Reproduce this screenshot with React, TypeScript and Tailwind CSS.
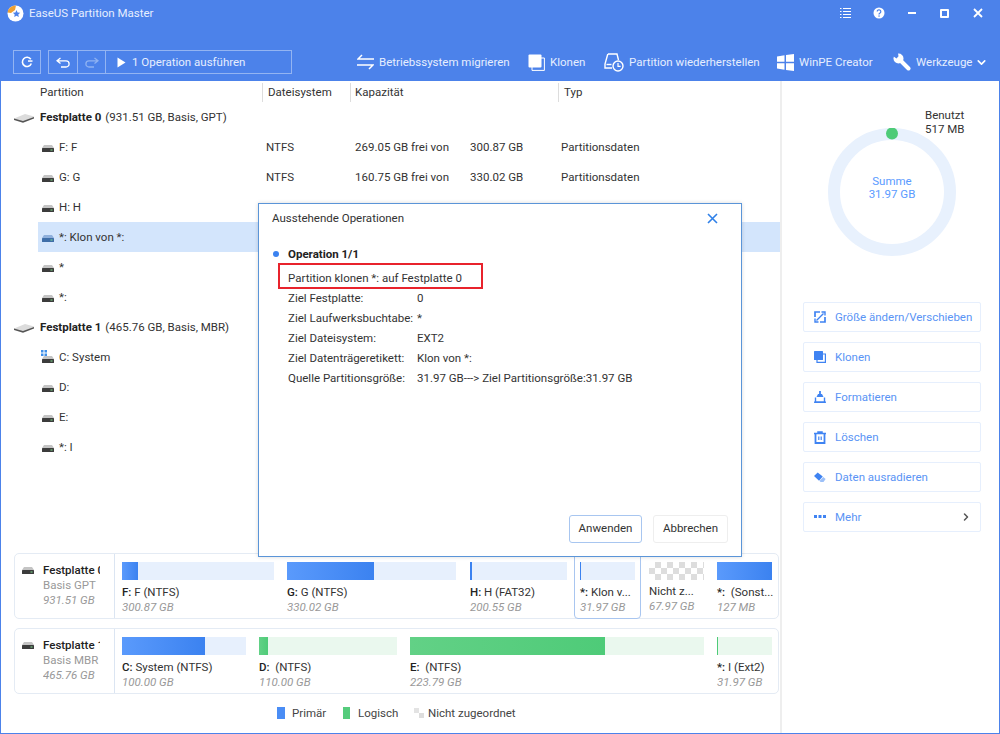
import { FC, ReactNode } from 'react';
import { ChevronDown, ChevronRight } from 'lucide-react';

const SmallDisk: FC<{ blue?: boolean }> = ({ blue }) => (
  <svg width="12" height="8" viewBox="0 0 12 8" className="shrink-0">
    <path d="M2 1h8l2 3H0z" fill={blue ? '#8fb0dc' : '#c4c4c4'} />
    <rect x="0" y="4" width="12" height="4" rx="0.5" fill={blue ? '#3f6ea8' : '#3c3c3c'} />
    <rect x="8.5" y="5.5" width="2" height="1" fill="#7fe08f" />
  </svg>
);

const BigDisk = () => (
  <svg width="20" height="10" viewBox="0 0 20 10" className="shrink-0">
    <path d="M0 5.5 L11 1 L20 3.5 L20 5 L9 9 L0 6.5z" fill="#dcdcdc" />
    <path d="M0 5.5 L9 8 L20 4 L20 5.5 L9 9.8 L0 7z" fill="#555555" />
  </svg>
);

const WinDisk = () => (
  <span className="relative flex h-[10px] w-[12px] shrink-0 items-end">
    <SmallDisk />
    <svg width="6" height="6" viewBox="0 0 6 6" className="absolute -left-px -top-[3px]">
      <path d="M0 0h2.5v2.5H0zM3.5 0H6v2.5H3.5zM0 3.5h2.5V6H0zM3.5 3.5H6V6H3.5z" fill="#3f8fe8" />
    </svg>
  </span>
);

const Logo = () => (
  <svg width="17" height="17" viewBox="0 0 17 17" className="shrink-0">
    <circle cx="8.5" cy="8.5" r="8" fill="#ffffff" />
    <path d="M0.6 7.5A8 8 0 0 1 9 0.5 L8 5 L4 8z" fill="#f0a030" />
    <path d="M9.5 5l1.1 2.4 2.6.3-1.9 1.8.5 2.6-2.3-1.3-2.3 1.3.5-2.6-1.9-1.8 2.6-.3z" fill="#4c82ea" />
  </svg>
);

const WindowButtons = () => (
  <div className="flex items-center">
    <svg width="33" height="12" viewBox="0 0 33 12">
      <path d="M11 1.5h1.5M14 1.5h8M11 4.5h1.5M14 4.5h8M11 7.5h1.5M14 7.5h8M11 10.5h1.5M14 10.5h8" stroke="#fff" strokeWidth="1.2" />
    </svg>
    <span className="flex w-[33px] justify-center">
      <svg width="12" height="12" viewBox="0 0 12 12">
        <circle cx="6" cy="6" r="5.5" fill="#fff" />
        <path d="M4.2 4.6a1.8 1.8 0 1 1 2.8 1.5c-.7.4-1 .7-1 1.4" fill="none" stroke="#4c82ea" strokeWidth="1.2" />
        <rect x="5.4" y="8.4" width="1.3" height="1.3" fill="#4c82ea" />
      </svg>
    </span>
    <span className="flex w-[33px] justify-center">
      <span className="h-[2px] w-[8px] bg-white" />
    </span>
    <span className="flex w-[33px] justify-center">
      <span className="h-[9px] w-[9px] rounded-[1px] border-2 border-white" />
    </span>
    <span className="flex w-[34px] justify-center">
      <svg width="10" height="10" viewBox="0 0 10 10">
        <path d="M1 1l8 8M9 1l-8 8" stroke="#fff" strokeWidth="1.8" />
      </svg>
    </span>
  </div>
);

const Toolbar = () => (
  <div className="mt-[24px] flex items-center pl-[12px] text-[11.5px] text-[#e6eeff]">
    <div className="flex h-[24px] w-[28px] items-center justify-center border border-white/40">
      <svg width="12" height="12" viewBox="0 0 12 12">
        <path d="M10.3 7.5A4.6 4.6 0 1 1 9.8 3.3" fill="none" stroke="#fff" strokeWidth="1.6" />
        <path d="M7 5.8h4.5V4.3H7z" fill="#fff" />
      </svg>
    </div>
    <div className="ml-[7px] flex h-[24px] w-[244px] items-center border border-white/40">
      <div className="flex h-full w-[29px] items-center justify-center border-r border-white/40">
        <svg width="15" height="11" viewBox="0 0 15 11">
          <path d="M4.5 1L1 3.8l3.5 2.8M1.5 3.8h8.5a3 3 0 0 1 0 6.2H5" fill="none" stroke="#fff" strokeWidth="1.3" />
        </svg>
      </div>
      <div className="flex h-full w-[28px] items-center justify-center border-r border-white/40">
        <svg width="15" height="11" viewBox="0 0 15 11">
          <path d="M10.5 1L14 3.8l-3.5 2.8M13.5 3.8H5a3 3 0 0 0 0 6.2h5" fill="none" stroke="#8fb2f2" strokeWidth="1.3" />
        </svg>
      </div>
      <svg width="9" height="11" viewBox="0 0 9 11" className="ml-[11px]">
        <path d="M0.5 0.5L8.5 5.5L0.5 10.5z" fill="#fff" />
      </svg>
      <span className="ml-[6px] whitespace-nowrap pt-[2px]">1 Operation ausführen</span>
    </div>
    <ToolItem className="ml-[65px] w-[171px]" label="Betriebssystem migrieren">
      <svg width="17" height="16" viewBox="0 0 17 16">
        <path d="M5 1L1 5h16M0 11h16l-4 4" fill="none" stroke="#fff" strokeWidth="1.5" />
      </svg>
    </ToolItem>
    <ToolItem className="w-[76px]" label="Klonen">
      <svg width="17" height="17" viewBox="0 0 17 17">
        <path d="M4 4h12.4v12.4H4z" fill="none" stroke="#fff" strokeWidth="1" />
        <rect x="0.5" y="0.5" width="13" height="13" rx="1" fill="#fff" />
      </svg>
    </ToolItem>
    <ToolItem className="w-[173px]" label="Partition wiederherstellen">
      <svg width="20" height="19" viewBox="0 0 20 19">
        <path d="M4 1h9l1.5 6M3.8 1L1 11v4h7" fill="none" stroke="#fff" strokeWidth="1.4" />
        <path d="M2.5 11.5h5" stroke="#fff" strokeWidth="1.4" />
        <circle cx="14" cy="13" r="5" fill="none" stroke="#fff" strokeWidth="1.4" />
        <path d="M14 10v3.3h2.6" fill="none" stroke="#fff" strokeWidth="1.2" />
      </svg>
    </ToolItem>
    <ToolItem className="w-[116px]" label="WinPE Creator">
      <svg width="17" height="17" viewBox="0 0 17 17">
        <path d="M0 2.5L7.5 1.2v6.6H0zM9 1l8-1v7.8H9zM0 9.2h7.5v6.6L0 14.5zM9 9.2h8V17l-8-1z" fill="#fff" />
      </svg>
    </ToolItem>
    <div className="flex items-center">
      <svg width="18" height="18" viewBox="0 0 18 18">
        <path d="M6 6L15.5 15.5" stroke="#fff" strokeWidth="4" strokeLinecap="round" />
        <circle cx="5.5" cy="5.5" r="5" fill="#fff" />
        <path d="M3.5 5.5L0 3V0h5l.5 3.2z" fill="#4c82ea" />
      </svg>
      <span className="ml-[5px] whitespace-nowrap pt-[2px]">Werkzeuge</span>
      <ChevronDown size={13} strokeWidth={3} className="ml-[3px] text-white" />
    </div>
  </div>
);

const ToolItem: FC<{ className: string; label: string; children: ReactNode }> = ({ className, label, children }) => (
  <div className={`flex items-center gap-[5px] whitespace-nowrap ${className}`}>
    {children}
    <span className="pt-[2px]">{label}</span>
  </div>
);

const TableHead = () => (
  <div className="flex h-[21px] items-end text-[11.5px] text-[#333333]">
    <div className="flex h-[19px] w-[262px] items-center border-r border-[#dddddd] pl-[39px] pt-px">Partition</div>
    <div className="flex h-[19px] w-[88px] items-center border-r border-[#dddddd] pl-[5px] pt-px">Dateisystem</div>
    <div className="flex h-[19px] w-[208px] items-center border-r border-[#dddddd] pl-[4px] pt-px">Kapazität</div>
    <div className="flex h-[19px] items-center pl-[5px] pt-px">Typ</div>
  </div>
);

const DiskRow: FC<{ name: string; info: string }> = ({ name, info }) => (
  <div className="flex h-[30px] items-center pl-[13px] pt-[2px] text-[11.5px] text-[#333333]">
    <BigDisk />
    <span className="ml-[6px] font-bold text-[#222222]">{name}</span>
    <span className="ml-[4px]">{info}</span>
  </div>
);

type Row = { name: string; fs?: string; free?: string; total?: string; type?: string; selected?: boolean; system?: boolean };

const PartRow: FC<Row> = ({ name, fs, free, total, type, selected, system }) => (
  <div className={`ml-[37px] flex h-[30px] items-center pl-[4px] pt-[2px] text-[11.5px] text-[#333333] ${selected ? 'bg-[#d3e5fc]' : ''}`}>
    {system ? <WinDisk /> : <SmallDisk blue={selected} />}
    <span className="ml-[5px] w-[207px]">{name}</span>
    <span className="w-[89px]">{fs}</span>
    <span className="w-[115px]">{free}</span>
    <span className="w-[91px]">{total}</span>
    <span>{type}</span>
  </div>
);

type Part = {
  width: string;
  bar: string;
  fill?: string;
  label: string;
  rest: string;
  size: string;
  free?: boolean;
  selected?: boolean;
  margin: string;
};

const PartCell: FC<Part> = ({ width, bar, fill, label, rest, size, free, selected, margin }) => (
  <div className={`${width} ${margin} shrink-0 pt-[8px] ${selected ? '-my-px rounded-b-[4px] border border-[#a9c6f0] bg-white px-[5px]' : ''}`}>
    <div className={`h-[18px] w-full ${bar}`}>
      {fill && <div className={`h-full ${fill}`} />}
    </div>
    <div className={`h-[16px] whitespace-nowrap text-[11.5px] leading-[16px] text-[#333333] ${free ? 'mt-[3px]' : 'mt-[4px]'}`}>
      <span className="font-medium text-[#222222]">{label}</span>{rest}
    </div>
    <div className="text-[11.5px] italic leading-[14px] text-[#999999]">{size}</div>
  </div>
);

const blueBar = 'bg-[#e7f0fd]';
const greenBar = 'bg-[#eaf8ee]';
const blueFill = 'bg-linear-to-r from-[#5a9afc] to-[#3b82f0]';
const greenFill = 'bg-linear-to-r from-[#62d186] to-[#4ecb78]';
const checker = 'bg-[conic-gradient(#dddddd_25%,#ffffff_0_50%,#dddddd_0_75%,#ffffff_0)] bg-[length:12px_12px]';

const disk0: Part[] = [
  { width: 'w-[152px]', margin: 'mr-[13px]', bar: blueBar, fill: `w-[16px] ${blueFill}`, label: 'F:', rest: ' F (NTFS)', size: '300.87 GB' },
  { width: 'w-[169px]', margin: 'mr-[14px]', bar: blueBar, fill: `w-[87px] ${blueFill}`, label: 'G:', rest: ' G (NTFS)', size: '330.02 GB' },
  { width: 'w-[97px]', margin: 'mr-[7px]', bar: blueBar, fill: 'w-[2px] bg-[#3b82f0]', label: 'H:', rest: ' H (FAT32)', size: '200.55 GB' },
  { width: 'w-[67px]', margin: 'mr-[8px]', bar: blueBar, fill: 'w-px bg-[#3b82f0]', label: '*:', rest: ' Klon v...', size: '31.97 GB', selected: true },
  { width: 'w-[55px]', margin: 'mr-[13px]', bar: checker, label: '', rest: 'Nicht z...', size: '67.97 GB', free: true },
  { width: 'w-[55px]', margin: '', bar: blueBar, fill: `w-full ${blueFill}`, label: '*:', rest: '\u00a0 (Sonst...', size: '127 MB' },
];

const disk1: Part[] = [
  { width: 'w-[124px]', margin: 'mr-[13px]', bar: blueBar, fill: `w-[83px] ${blueFill}`, label: 'C:', rest: ' System (NTFS)', size: '100.00 GB' },
  { width: 'w-[138px]', margin: 'mr-[13px]', bar: greenBar, fill: `w-[9px] ${greenFill}`, label: 'D:', rest: '\u00a0 (NTFS)', size: '110.00 GB' },
  { width: 'w-[294px]', margin: 'mr-[13px]', bar: greenBar, fill: `w-[195px] ${greenFill}`, label: 'E:', rest: '\u00a0 (NTFS)', size: '223.79 GB' },
  { width: 'w-[55px]', margin: '', bar: greenBar, fill: 'w-px bg-[#4ecb78]', label: '*:', rest: ' I (Ext2)', size: '31.97 GB' },
];

const DiskCard: FC<{ name: string; kind: string; size: string; parts: Part[]; className?: string }> = ({ name, kind, size, parts, className }) => (
  <div className={`ml-[13px] flex h-[66px] w-[765px] rounded-[5px] border border-[#e4ebf4] ${className ?? ''}`}>
    <div className="flex w-[100px] shrink-0 border-r border-[#dbe5f2] pl-[7px]">
      <div className="pt-[12px]"><SmallDisk /></div>
      <div className="ml-[9px] w-[57px] overflow-hidden whitespace-nowrap pt-[9px] text-[11.5px] leading-[15px]">
        <div className="font-medium text-[#222222]">{name}</div>
        <div className="text-[#999999]">{kind}</div>
        <div className="italic text-[#999999]">{size}</div>
      </div>
    </div>
    <div className="flex pl-[7px]">
      {parts.map((p) => <PartCell key={p.size + p.label} {...p} />)}
    </div>
  </div>
);

const Legend = () => (
  <div className="ml-[276px] mt-[9px] flex h-[20px] items-center text-[11.5px] text-[#444444]">
    <span className="h-[12px] w-[8px] bg-[#4a8df5]" />
    <span className="ml-[7px] w-[51px] pt-px">Primär</span>
    <span className="h-[12px] w-[7px] bg-[#55cc7c]" />
    <span className="ml-[8px] w-[56px] pt-px">Logisch</span>
    <svg width="11" height="10" viewBox="0 0 11 10">
      <path d="M0 0h5v5H0z" fill="#e3e3e3" />
      <path d="M5 5h5v5H5z" fill="#dddddd" />
    </svg>
    <span className="ml-[3px] pt-px">Nicht zugeordnet</span>
  </div>
);

const actionIcons: Record<string, ReactNode> = {
  resize: (
    <svg width="12" height="12" viewBox="0 0 12 12">
      <path d="M6 1H1v5M6 11h5V6" fill="none" stroke="#3f83f2" strokeWidth="1.7" />
      <path d="M2.5 9.5l7-7M7.5 1h3.5v3.5M1 7.5V11h3.5" fill="none" stroke="#3f83f2" strokeWidth="1.4" />
    </svg>
  ),
  clone: (
    <svg width="12" height="12" viewBox="0 0 12 12">
      <path d="M3 3h8.4v8.4H3z" fill="none" stroke="#3f83f2" strokeWidth="1.2" />
      <rect x="0" y="0" width="9" height="9" rx="0.5" fill="#3f83f2" />
    </svg>
  ),
  format: (
    <svg width="12" height="12" viewBox="0 0 12 12">
      <path d="M6 0v3" stroke="#3f83f2" strokeWidth="1.8" />
      <path d="M4 3h4l1.5 3h-7z" fill="#3f83f2" />
      <path d="M1.5 6.5v4.7h9V6.5" fill="none" stroke="#3f83f2" strokeWidth="1.4" />
      <path d="M0 11.2h12" stroke="#3f83f2" strokeWidth="1.4" />
    </svg>
  ),
  trash: (
    <svg width="12" height="13" viewBox="0 0 12 13">
      <path d="M0 2.5h12M4 2.5V1h4v1.5" fill="none" stroke="#3f83f2" strokeWidth="1.5" />
      <path d="M1.5 3v9h9V3" fill="none" stroke="#3f83f2" strokeWidth="1.8" />
      <path d="M4.8 5.5v3.6M7.2 5.5v3.6" stroke="#3f83f2" strokeWidth="1.2" />
    </svg>
  ),
  eraser: (
    <svg width="13" height="11" viewBox="0 0 13 11">
      <path d="M0 4L4 0l5.5 4.5-4 4.5z" fill="#3f83f2" />
      <path d="M6 9.4l4-4.5L12.6 7l-2.3 3.4H7.2z" fill="#9cc0f8" />
    </svg>
  ),
  more: (
    <svg width="12" height="4" viewBox="0 0 12 4">
      <path d="M0 0h3v3H0zM4.5 0h3v3h-3zM9 0h3v3H9z" fill="#3f83f2" />
    </svg>
  ),
};

const ActionButton: FC<{ icon: string; label: string; arrow?: boolean }> = ({ icon, label, arrow }) => (
  <div className="flex h-[30px] w-[178px] items-center rounded-[2px] border border-[#e6effd] pl-[10px] text-[11.5px] text-[#5a94f5]">
    <span className="flex w-[12px] justify-center">{actionIcons[icon]}</span>
    <span className="ml-[9px] whitespace-nowrap pt-px">{label}</span>
    {arrow && <ChevronRight size={12} strokeWidth={3} className="ml-auto mr-[8px] text-[#555555]" />}
  </div>
);

const SidePanel = () => (
  <div className="w-[219px] shrink-0 border-l-2 border-[#eeeeee] pt-[27px]">
    <div className="ml-[143px] text-[11.5px] leading-[14px] text-[#333333]">
      <div>Benutzt</div>
      <div>517 MB</div>
    </div>
    <div className="relative -mt-[8px] ml-[46px] h-[128px] w-[128px]">
      <svg width="128" height="128" viewBox="0 0 128 128">
        <circle cx="64" cy="64" r="58" fill="none" stroke="#e8f1fd" strokeWidth="12" />
        <circle cx="64" cy="5.5" r="6" fill="#4ecb78" />
      </svg>
      <div className="absolute inset-0 -top-[8px] flex flex-col items-center justify-center text-[11.5px] leading-[13px] text-[#5a9bff]">
        <div>Summe</div>
        <div>31.97 GB</div>
      </div>
    </div>
    <div className="ml-[21px] mt-[46px] flex flex-col gap-[10px]">
      <ActionButton icon="resize" label="Größe ändern/Verschieben" />
      <ActionButton icon="clone" label="Klonen" />
      <ActionButton icon="format" label="Formatieren" />
      <ActionButton icon="trash" label="Löschen" />
      <ActionButton icon="eraser" label="Daten ausradieren" />
      <ActionButton icon="more" label="Mehr" arrow />
    </div>
  </div>
);

const details = [
  ['Ziel Festplatte:', '0'],
  ['Ziel Laufwerksbuchtabe:', '*'],
  ['Ziel Dateisystem:', 'EXT2'],
  ['Ziel Datenträgeretikett:', 'Klon von *:'],
  ['Quelle Partitionsgröße:', '31.97 GB---> Ziel Partitionsgröße:31.97 GB'],
];

const PendingDialog = () => (
  <div className="absolute left-[257px] top-[203px] flex h-[354px] w-[484px] flex-col border border-[#5b95d8] bg-white text-[11.5px] text-[#333333] shadow-[0_0_4px_rgba(0,0,0,0.15)]">
    <div className="flex h-[27px] items-center justify-between pl-[13px] pr-[23px] pt-[1px]">
      <span className="pt-[2px]">Ausstehende Operationen</span>
      <svg width="11" height="11" viewBox="0 0 11 11">
        <path d="M1 1l9 9M10 1l-9 9" stroke="#2f80e8" strokeWidth="1.6" />
      </svg>
    </div>
    <div className="mt-[13px] flex h-[20px] items-center pl-[14px]">
      <span className="h-[6px] w-[6px] rounded-full bg-[#3b82f0]" />
      <span className="ml-[9px] pt-[2px] font-bold text-[#222222]">Operation 1/1</span>
    </div>
    <div className="ml-[19px] -mt-px flex h-[26px] w-[205px] items-end border-2 border-[#e8232c] pl-[8px]">
      Partition klonen *: auf Festplatte 0
    </div>
    <div className="-mt-px">
      {details.map(([k, v]) => (
        <div key={k} className="flex h-[20px] items-center pl-[29px] pt-[2px]">
          <span className="w-[129px] whitespace-nowrap">{k}</span>
          <span className="whitespace-nowrap">{v}</span>
        </div>
      ))}
    </div>
    <div className="mt-auto flex justify-end gap-[11px] pb-[13px] pr-[13px]">
      <div className="flex h-[28px] w-[73px] items-center justify-center rounded-[3px] border border-[#a8c6f0]">Anwenden</div>
      <div className="flex h-[28px] w-[75px] items-center justify-center rounded-[3px] border border-[#eeeeee]">Abbrechen</div>
    </div>
  </div>
);

export default function App() {
  return (
    <div className="relative flex h-[734px] w-[1000px] flex-col overflow-hidden border-x border-b border-[#4c82ea] bg-white font-['Roboto',sans-serif]">
      <div className="h-[81px] shrink-0 bg-[#4c82ea]">
        <div className="flex h-[26px] items-center justify-between pl-[6px] pr-[4px]">
          <div className="flex items-center gap-[5px] text-[11.5px] text-[#e6eeff]">
            <Logo />
            <span className="pt-[2px]">EaseUS Partition Master</span>
          </div>
          <WindowButtons />
        </div>
        <Toolbar />
      </div>
      <div className="flex flex-1">
        <div className="w-[779px] shrink-0">
          <TableHead />
          <DiskRow name="Festplatte 0" info="(931.51 GB, Basis, GPT)" />
          <PartRow name="F: F" fs="NTFS" free="269.05 GB frei von" total="300.87 GB" type="Partitionsdaten" />
          <PartRow name="G: G" fs="NTFS" free="160.75 GB frei von" total="330.02 GB" type="Partitionsdaten" />
          <PartRow name="H: H" />
          <PartRow name="*: Klon von *:" selected />
          <PartRow name="*" />
          <PartRow name="*:" />
          <DiskRow name="Festplatte 1" info="(465.76 GB, Basis, MBR)" />
          <PartRow name="C: System" system />
          <PartRow name="D:" />
          <PartRow name="E:" />
          <PartRow name="*: I" />
          <DiskCard className="mt-[91px]" name="Festplatte 0" kind="Basis GPT" size="931.51 GB" parts={disk0} />
          <DiskCard className="mt-[9px]" name="Festplatte 1" kind="Basis MBR" size="465.76 GB" parts={disk1} />
          <Legend />
        </div>
        <SidePanel />
      </div>
      <PendingDialog />
    </div>
  );
}
